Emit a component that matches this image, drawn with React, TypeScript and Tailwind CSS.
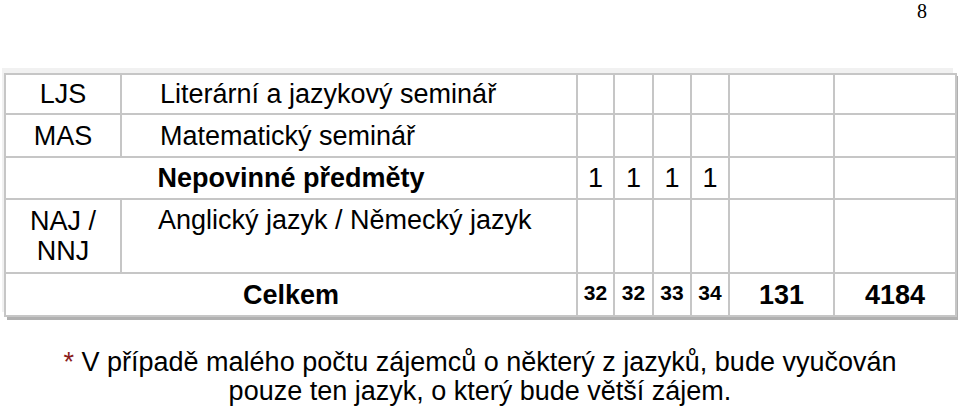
const cell = 'border-2 border-[#c6c6c6] p-0';

const subjects = [
  { code: 'LJS', name: 'Literární a jazykový seminář', h: 'h-[40px]' },
  { code: 'MAS', name: 'Matematický seminář', h: 'h-[43px]' },
];

function EmptyCells({ count }: { count: number }) {
  return (
    <>
      {Array.from({ length: count }).map((_, i) => (
        <td key={i} className={cell} />
      ))}
    </>
  );
}

export default function App() {
  return (
    <div className="w-[960px] h-[412px] overflow-hidden bg-white text-black font-['Liberation_Sans',Arial,sans-serif]">
      {/* page number */}
      <div className="flex justify-end pr-[33px] h-[68px]">
        <span className="font-['Liberation_Serif',serif] text-[20px] leading-[22px]">8</span>
      </div>

      {/* subject table */}
      <div className="ml-[4px] w-[951px] mt-[5px] shadow-[-2px_-5px_0_#f1f1f1,3px_3px_0_#b0b0b0]">
        <table className="w-full table-fixed border-collapse border-2 border-[#c6c6c6] text-[27px] leading-[30px]">
          <colgroup>
            <col className="w-[116px]" />
            <col className="w-[456px]" />
            <col className="w-[37px]" />
            <col className="w-[39px]" />
            <col className="w-[38px]" />
            <col className="w-[38px]" />
            <col className="w-[105px]" />
            <col className="w-[122px]" />
          </colgroup>
          <tbody>
            {subjects.map((s) => (
              <tr key={s.code} className={s.h}>
                <td className={`${cell} text-center align-middle`}>{s.code}</td>
                <td className={`${cell} pl-[38px] align-middle whitespace-nowrap`}>{s.name}</td>
                <EmptyCells count={6} />
              </tr>
            ))}
            <tr className="h-[42px]">
              <td colSpan={2} className={`${cell} text-center align-middle font-bold`}>
                Nepovinné předměty
              </td>
              {[1, 1, 1, 1].map((n, i) => (
                <td key={i} className={`${cell} text-center align-middle`}>
                  {n}
                </td>
              ))}
              <EmptyCells count={2} />
            </tr>
            <tr className="h-[74px]">
              <td className={`${cell} text-center align-middle px-[6px]`}>NAJ / NNJ</td>
              <td className={`${cell} pl-[36px] pt-[5px] align-top whitespace-nowrap`}>
                Anglický jazyk / Německý jazyk
              </td>
              <EmptyCells count={6} />
            </tr>
            <tr className="h-[43px]">
              <td colSpan={2} className={`${cell} text-center align-middle font-bold`}>
                Celkem
              </td>
              {['32', '32', '33', '34'].map((n, i) => (
                <td key={i} className={`${cell} text-center align-middle font-bold text-[21px] pb-[4px]`}>
                  {n}
                </td>
              ))}
              <td className={`${cell} text-center align-middle font-bold`}>131</td>
              <td className={`${cell} text-center align-middle font-bold`}>4184</td>
            </tr>
          </tbody>
        </table>
      </div>

      {/* footnote */}
      <p className="mt-[31px] text-center text-[27px] leading-[29px]">
        <span className="text-[#8a1c1c]">*</span> V případě malého počtu zájemců o některý z jazyků, bude vyučován
        <br />
        pouze ten jazyk, o který bude větší zájem.
      </p>
    </div>
  );
}
